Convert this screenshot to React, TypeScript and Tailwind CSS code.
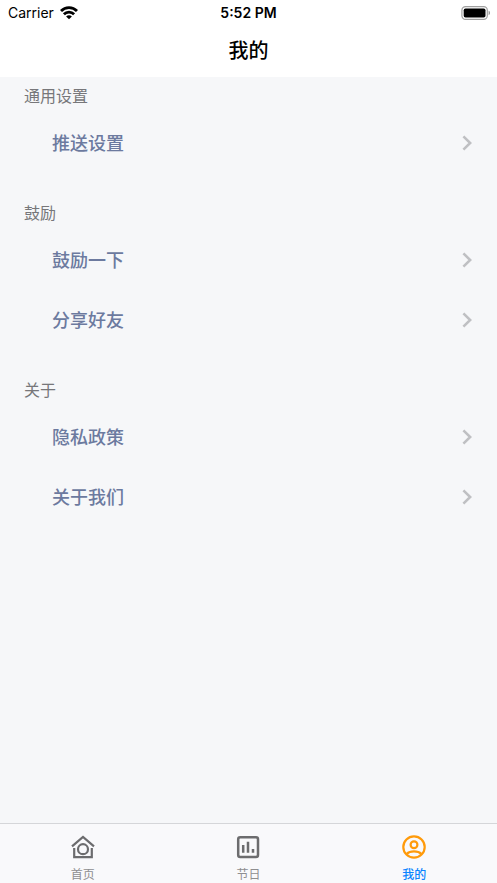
import clsx from "clsx";

type Tab = {
  key: string;
  label: string;
  icon: React.ReactNode;
};

const sections = [
  { title: "通用设置", items: ["推送设置"] },
  { title: "鼓励", items: ["鼓励一下", "分享好友"] },
  { title: "关于", items: ["隐私政策", "关于我们"] },
];

const WifiIcon = () => (
  <svg viewBox="0 0 18 14" className="w-[18px] h-[14px]" aria-hidden="true">
    <g fill="none" stroke="currentColor" strokeWidth="2.8">
      <path d="M1 4.9C5.4 0.4 12.6 0.4 17 4.9" />
      <path d="M3.9 8.2C6.7 5.4 11.3 5.4 14.1 8.2" />
    </g>
    <path d="M6.1 10.4C7.8 8.9 10.2 8.9 11.9 10.4L9 13.3Z" fill="currentColor" />
  </svg>
);

const BatteryIcon = () => (
  <svg viewBox="0 0 28 14" className="w-7 h-[14px] overflow-visible" aria-hidden="true">
    <rect x="0.9" y="0.6" width="25.4" height="12.8" rx="3.6" fill="none" stroke="#a0a0a0" strokeWidth="1.2" />
    <rect x="2.7" y="2.4" width="21.8" height="9.2" rx="1.8" fill="#000" />
    <path d="M27.6 4.8C29.4 5.4 29.4 8.6 27.6 9.2Z" fill="#8f8f8f" />
  </svg>
);

const ChevronIcon = () => (
  <svg viewBox="0 0 10 16" className="w-[10px] h-4 text-[#bfc0c3]" aria-hidden="true">
    <path d="M1.4 1.4L8.2 8L1.4 14.6" fill="none" stroke="currentColor" strokeWidth="2.6" />
  </svg>
);

const HomeIcon = () => (
  <svg viewBox="0 0 24 24" className="w-6 h-6 text-[#6c6c6e]" fill="none" stroke="currentColor" strokeWidth="2.2" aria-hidden="true">
    <path d="M1 11.4L12 2L23 11.4" />
    <path d="M3.2 13V22.2H20.8V13" />
    <circle cx="12" cy="14.2" r="5" />
  </svg>
);

const ChartIcon = () => (
  <svg viewBox="0 0 24 24" className="w-6 h-6 text-[#6c6c6e]" fill="none" stroke="currentColor" aria-hidden="true">
    <rect x="2.2" y="2.2" width="19.8" height="19.8" rx="2" strokeWidth="2.5" />
    <path d="M7.2 10V17.8M12 6.8V17.8M17 14V17.8" strokeWidth="2.5" />
  </svg>
);

const UserIcon = () => (
  <svg viewBox="0 0 24 24" className="w-6 h-6 text-[#ff9a0a]" fill="none" stroke="currentColor" strokeWidth="2.2" aria-hidden="true">
    <circle cx="12" cy="12" r="10.7" />
    <circle cx="12" cy="9.8" r="3.4" />
    <path d="M4.6 19C8.2 15.6 15.8 15.6 19.4 19" />
  </svg>
);

const tabs: Tab[] = [
  { key: "home", label: "首页", icon: <HomeIcon /> },
  { key: "festival", label: "节日", icon: <ChartIcon /> },
  { key: "mine", label: "我的", icon: <UserIcon /> },
];

const App = () => {
  const active = "mine";

  return (
    <div className="min-h-screen flex flex-col bg-[#f6f7f9] font-['Inter','Noto_Sans_CJK_SC',sans-serif]">
      <header className="bg-white text-black">
        <div className="grid grid-cols-3 items-center h-[26px] px-2 text-sm">
          <div className="flex items-center gap-[6px]">
            <span>Carrier</span>
            <WifiIcon />
          </div>
          <span className="text-center font-semibold">5:52 PM</span>
          <div className="flex justify-end">
            <BatteryIcon />
          </div>
        </div>
        <h1 className="h-[51px] leading-[51px] text-center text-xl font-medium">我的</h1>
      </header>

      <main className="flex-1 flex flex-col gap-[21px]">
        {sections.map((section) => (
          <section key={section.title}>
            <h2 className="h-9 leading-[38px] pl-6 text-base font-normal text-[#77777a]">
              {section.title}
            </h2>
            <ul>
              {section.items.map((item) => (
                <li key={item}>
                  <button
                    type="button"
                    className="w-full h-[60px] flex items-center justify-between pl-[52px] pr-[25px] text-lg leading-[60px] font-medium text-[#6c7a9f]"
                  >
                    <span className="pt-[2px]">{item}</span>
                    <ChevronIcon />
                  </button>
                </li>
              ))}
            </ul>
          </section>
        ))}
      </main>

      <nav className="grid grid-cols-3 h-[60px] border-t border-[#d5d6d9] bg-[#f9f9fb]">
        {tabs.map((tab) => (
          <a
            key={tab.key}
            href={`#${tab.key}`}
            className={clsx(
              "flex flex-col items-center pt-[11px] gap-2 text-xs leading-4",
              tab.key === active ? "font-medium text-[#0a84ff]" : "text-[#8e8e90]"
            )}
          >
            {tab.icon}
            {tab.label}
          </a>
        ))}
      </nav>
    </div>
  );
};

export default App;
